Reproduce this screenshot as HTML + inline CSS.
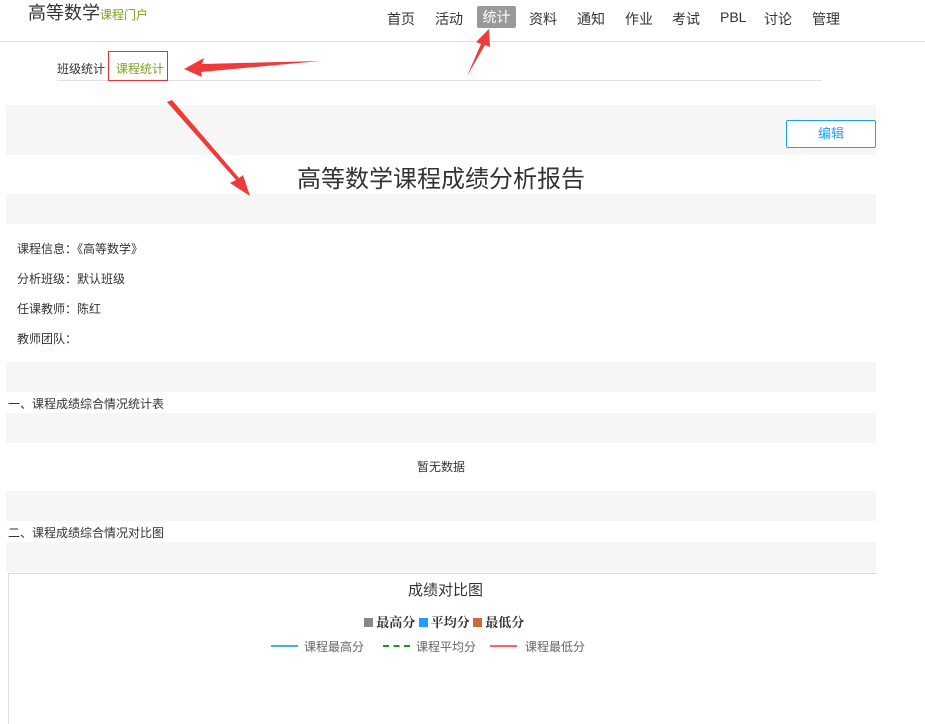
<!DOCTYPE html>
<html><head><meta charset="utf-8"><style>
body{margin:0;width:925px;height:715px;position:relative;overflow:hidden;background:#fff;font-family:"Liberation Sans","Noto Sans CJK SC",sans-serif;color:#333}
.a{position:absolute;white-space:nowrap}
.band{position:absolute;left:6px;width:870px;background:#f6f6f6}
.nav{position:absolute;top:9px;font-size:14px;color:#333}
.s{font-size:12px}
</style></head><body>
<div class="a" style="left:28px;top:-1px;font-size:18px;color:#333">高等数学<span style="font-size:12px;color:#7aa31f">课程门户</span></div>
<div class="nav" style="left:387px">首页</div>
<div class="nav" style="left:435px">活动</div>
<div class="a" style="left:477px;top:6px;width:39px;height:22px;background:#999;border-radius:2px;color:#fff;font-size:14px;text-align:center;line-height:22px">统计</div>
<div class="nav" style="left:529px">资料</div>
<div class="nav" style="left:577px">通知</div>
<div class="nav" style="left:625px">作业</div>
<div class="nav" style="left:672px">考试</div>
<div class="nav" style="left:720px">PBL</div>
<div class="nav" style="left:764px">讨论</div>
<div class="nav" style="left:812px">管理</div>
<div class="a" style="left:0;top:41px;width:925px;height:1px;background:#e2e2e2"></div>
<div class="a" style="left:57px;top:80px;width:765px;height:1px;background:#e2e2e2"></div>
<div class="a s" style="left:57px;top:60px;font-size:12px">班级统计</div>
<div class="a" style="left:108px;top:51px;width:60px;height:30px;border:1px solid #e53333;box-sizing:border-box"></div>
<div class="a" style="left:116px;top:60px;font-size:12px;color:#7aa31f">课程统计</div>
<div class="band" style="top:105px;height:50px"></div>
<div class="a" style="left:786px;top:120px;width:88px;height:26px;border:1px solid #1e9fff;border-radius:2px;background:#fff;color:#1e9fff;font-size:13px;text-align:center;line-height:26px">编辑</div>
<div class="a" style="left:297px;top:159px;font-size:24px;color:#333">高等数学课程成绩分析报告</div>
<div class="band" style="top:194px;height:30px"></div>
<div class="a s" style="left:17px;top:240px">课程信息：《高等数学》</div>
<div class="a s" style="left:17px;top:270px">分析班级：默认班级</div>
<div class="a s" style="left:17px;top:300px">任课教师：陈红</div>
<div class="a s" style="left:17px;top:330px">教师团队：</div>
<div class="band" style="top:362px;height:30px"></div>
<div class="a s" style="left:8px;top:395px">一、课程成绩综合情况统计表</div>
<div class="band" style="top:413px;height:30px"></div>
<div class="a s" style="left:417px;top:458px">暂无数据</div>
<div class="band" style="top:491px;height:30px"></div>
<div class="a s" style="left:8px;top:524px">二、课程成绩综合情况对比图</div>
<div class="band" style="top:542px;height:30px"></div>
<div class="a" style="left:8px;top:573px;width:868px;height:150px;border-left:1px solid #ddd;border-top:1px solid #ddd"></div>
<div class="a" style="left:408px;top:579px;font-size:15px">成绩对比图</div>
<div class="a" style="left:364px;top:612px;font-size:13px;font-weight:bold;font-family:'Liberation Serif','Noto Serif CJK SC',serif"><span style="display:inline-block;width:9px;height:9px;background:#888"></span> 最高分 <span style="display:inline-block;width:9px;height:9px;background:#1e9fff"></span> 平均分 <span style="display:inline-block;width:9px;height:9px;background:#d0693a"></span> 最低分</div>
<div class="a" style="left:271px;top:645px;width:27px;height:2px;background:#4bb0d8"></div>
<div class="a" style="left:304px;top:638px;font-size:12px;color:#666">课程最高分</div>
<div class="a" style="left:383px;top:645px;width:27px;height:0;border-top:2px dashed #1a9c1a"></div>
<div class="a" style="left:416px;top:638px;font-size:12px;color:#666">课程平均分</div>
<div class="a" style="left:490px;top:645px;width:27px;height:2px;background:#ff6060"></div>
<div class="a" style="left:525px;top:638px;font-size:12px;color:#666">课程最低分</div>
<svg class="a" style="left:0;top:0" width="925" height="715">
<polygon points="320,61 202,64 204,58 184,69 202,77 201,72" fill="#f03a3a"/>
<polygon points="467,76 481,44 476,42 489,29 490,47 485,45" fill="#f03a3a"/>
<polygon points="167,102 236,180 230,183 250,196 243,175 239,178 172,100" fill="#f03a3a"/>
</svg>
</body></html>
